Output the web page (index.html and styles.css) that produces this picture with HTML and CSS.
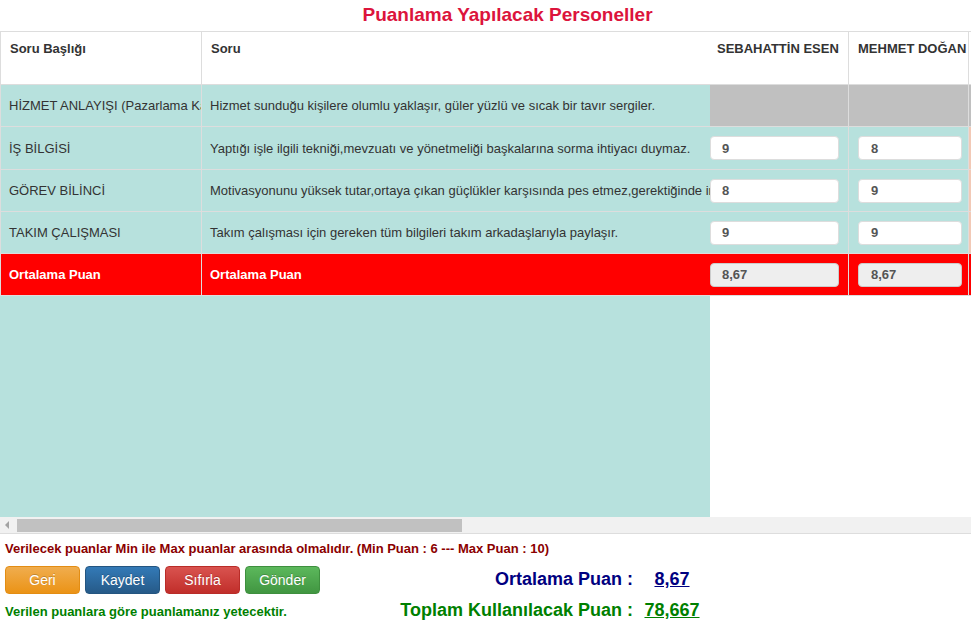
FILE: index.html
```html
<!DOCTYPE html>
<html lang="tr">
<head>
  <meta charset="UTF-8">
  <meta name="viewport" content="width=device-width, initial-scale=1.0">
  <title>Puanlama</title>
  <link rel="stylesheet" href="styles.css">
</head>
<body>
  <h3 class="title">Puanlama Yapılacak Personeller</h3>

  <div class="grid">
    <div class="panes">
      <div class="fixed">
        <table class="tbl">
          <colgroup><col class="w-baslik"><col class="w-soru"></colgroup>
          <tr class="head"><th>Soru Başlığı</th><th>Soru</th></tr>
          <tr class="row"><td>HİZMET ANLAYIŞI (Pazarlama Kampanyaları)</td><td>Hizmet sunduğu kişilere olumlu yaklaşır, güler yüzlü ve sıcak bir tavır sergiler.</td></tr>
          <tr class="row tall"><td>İŞ BİLGİSİ</td><td>Yaptığı işle ilgili tekniği,mevzuatı ve yönetmeliği başkalarına sorma ihtiyacı duymaz.</td></tr>
          <tr class="row"><td>GÖREV BİLİNCİ</td><td>Motivasyonunu yüksek tutar,ortaya çıkan güçlükler karşısında pes etmez,gerektiğinde inisiyatif alır.</td></tr>
          <tr class="row"><td>TAKIM ÇALIŞMASI</td><td>Takım çalışması için gereken tüm bilgileri takım arkadaşlarıyla paylaşır.</td></tr>
          <tr class="avg"><td>Ortalama Puan</td><td>Ortalama Puan</td></tr>
        </table>
      </div>

      <div class="scroll">
        <table class="tbl">
          <colgroup><col class="w-p1"><col class="w-p2"><col class="w-p3"></colgroup>
          <tr class="head"><th class="p1">SEBAHATTİN ESEN</th><th class="p2">MEHMET DOĞAN</th><th></th></tr>
          <tr class="row locked"><td></td><td></td><td></td></tr>
          <tr class="row tall"><td class="p1"><input class="score" value="9"></td><td class="p2"><input class="score" value="8"></td><td class="next"></td></tr>
          <tr class="row"><td class="p1"><input class="score" value="8"></td><td class="p2"><input class="score" value="9"></td><td class="next"></td></tr>
          <tr class="row"><td class="p1"><input class="score" value="9"></td><td class="p2"><input class="score" value="9"></td><td class="next"></td></tr>
          <tr class="avg"><td class="p1"><input class="score ro" value="8,67" readonly></td><td class="p2"><input class="score ro" value="8,67" readonly></td><td></td></tr>
        </table>
      </div>
    </div>

    <div class="hbar"><span class="arrow"></span><span class="thumb"></span></div>
  </div>

  <p class="note">Verilecek puanlar Min ile Max puanlar arasında olmalıdır. (Min Puan : 6 --- Max Puan : 10)</p>

  <div class="bottom">
    <div class="actions">
      <div class="buttons">
        <button class="btn orange">Geri</button>
        <button class="btn blue">Kaydet</button>
        <button class="btn red">Sıfırla</button>
        <button class="btn green">Gönder</button>
      </div>
      <p class="info">Verilen puanlara göre puanlamanız yetecektir.</p>
    </div>

    <table class="totals">
      <tr class="t-avg"><td class="lbl">Ortalama Puan :</td><td class="val"><a href="#">8,67</a></td></tr>
      <tr class="t-sum"><td class="lbl">Toplam Kullanılacak Puan :</td><td class="val"><a href="#">78,667</a></td></tr>
    </table>
  </div>
</body>
</html>
```

FILE: styles.css
```css
body { margin: 0; font-family: "Liberation Sans", Arial, sans-serif; color: #333; }

.title { margin: 0; height: 31px; line-height: 29px; padding-left: 44px; text-align: center; font-size: 19px; color: #dc143c; }

.grid { border-top: 1px solid #ddd; border-bottom: 1px solid #ddd; }
.panes { display: flex; height: 485px; }
.fixed { width: 710px; flex: none; background: #b7e1dd; overflow: hidden; }
.scroll { flex: 1; overflow: hidden; background: #fff; }

.tbl { border-collapse: collapse; table-layout: fixed; }
.tbl th, .tbl td { border: 1px solid #ddd; white-space: nowrap; overflow: hidden; font-size: 13px; }
.tbl tr:first-child th { border-top: 0; }
.fixed .tbl { width: 711px; }
.w-baslik { width: 201px; }
.w-soru { width: 510px; }
.w-p1 { width: 139px; }
.w-p2 { width: 120px; }
.w-p3 { width: 20px; }
.scroll .tbl { width: 279px; margin-left: -1px; }

.head th { height: 43px; padding: 9px 9px 0; text-align: left; vertical-align: top; color: #333; background: #fff; }
.head th.p1 { padding-left: 7px; }
.row td { height: 41px; padding: 0 8px; color: #333; background: #b7e1dd; }
.row.tall td { height: 42px; }
.row td.next { background: #f2c9b6; }
.row.locked td { background: #c0c0c0; }
.avg td { height: 41px; padding: 0 8px; background: #f00; color: #fff; font-weight: bold; }

.tbl td.p1 { padding: 0 9px 0 0; }
.tbl td.p2 { padding: 0 6px 0 9px; }
.score { box-sizing: border-box; width: 100%; height: 24px; padding: 0 0 0 11px; border: 1px solid #ddd; border-radius: 4px; background: #fff; font: bold 13px "Liberation Sans", Arial, sans-serif; color: #555; }
.p2 .score { padding-left: 12px; }
.score.ro { background: #eee; border-color: #ccc; }

.hbar { position: relative; height: 16px; background: #f1f1f1; }
.arrow { position: absolute; left: 5px; top: 4px; border-style: solid; border-width: 4px 4px 4px 0; border-color: transparent #a3a3a3 transparent transparent; }
.thumb { position: absolute; left: 17px; top: 2px; width: 445px; height: 13px; background: #c1c1c1; }

.note { margin: 7px 0 0 5px; font-size: 13px; font-weight: bold; color: #8b0000; }

.bottom { display: flex; align-items: flex-start; }
.actions { width: 395px; padding-left: 5px; }
.buttons { display: flex; gap: 5px; margin-top: 10px; }
.btn { width: 75px; height: 28px; padding: 0; border: 1px solid; border-radius: 4px; color: #fff; font: 14px "Liberation Sans", Arial, sans-serif; text-shadow: 0 -1px 0 rgba(0,0,0,.2); }
.orange { background: linear-gradient(#f0ad4e, #eb9316); border-color: #e38d13; }
.blue { background: linear-gradient(#337ab7, #265a88); border-color: #245580; }
.red { background: linear-gradient(#d9534f, #c12e2a); border-color: #b92c28; }
.green { background: linear-gradient(#5cb85c, #419641); border-color: #3e8f3e; }
.info { margin: 10px 0 0; font-size: 13px; font-weight: bold; color: #008000; }

.totals { border-collapse: collapse; margin-top: 8px; }
.totals td { height: 31px; padding: 0; font-size: 18px; font-weight: bold; white-space: nowrap; }
.totals .lbl { text-align: right; width: 233px; padding-right: 3px; }
.totals .val { text-align: center; width: 72px; }
.t-avg td, .t-avg a { color: #000080; }
.t-sum td, .t-sum a { color: #008000; }
```
